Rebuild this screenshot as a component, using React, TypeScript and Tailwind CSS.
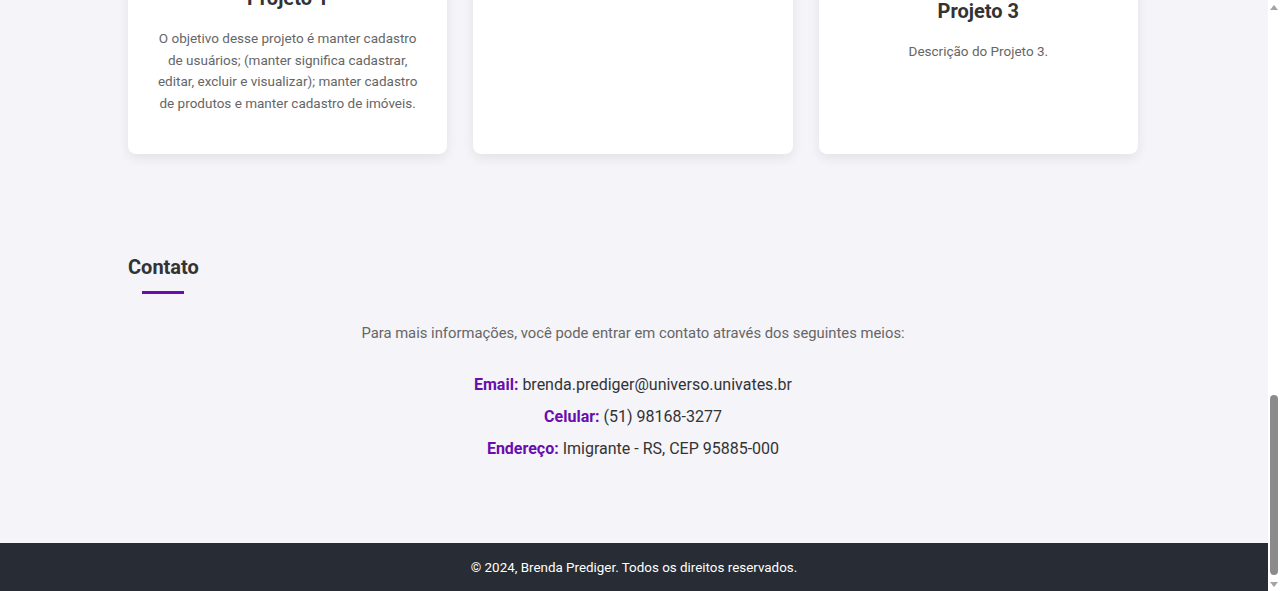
import { useLayoutEffect, useRef } from "react";

const projetos = [
  {
    titulo: "Projeto 1",
    imagem: "h-[200px] bg-gradient-to-br from-purple-200 to-indigo-200",
    descricao:
      "O objetivo desse projeto é manter cadastro de usuários; (manter significa cadastrar, editar, excluir e visualizar); manter cadastro de produtos e manter cadastro de imóveis.",
  },
  {
    titulo: "Projeto 2",
    imagem: "h-[60px] bg-gradient-to-br from-indigo-200 to-purple-200",
    descricao: "Descrição do Projeto 2.",
  },
  {
    titulo: "Projeto 3",
    imagem: "h-[213px] bg-gradient-to-br from-purple-100 to-purple-300",
    descricao: "Descrição do Projeto 3.",
  },
];

function SectionTitle({ children }: { children: string }) {
  return (
    <div className="inline-flex flex-col items-center">
      <h2 className="text-[20px] leading-7 font-bold text-[#333]">{children}</h2>
      <span className="mt-[10px] h-[3px] w-[42px] bg-[#6a0dad]" />
    </div>
  );
}

function Header() {
  return (
    <header className="h-16 bg-[#282c34] text-white">
      <div className="mx-auto flex h-full w-[1010px] items-center justify-between">
        <span className="text-lg font-bold">Brenda Prediger</span>
        <nav className="flex gap-6 text-sm">
          <a href="#sobre">Sobre</a>
          <a href="#projetos">Projetos</a>
          <a href="#contato">Contato</a>
        </nav>
      </div>
    </header>
  );
}

function Sobre() {
  return (
    <section id="sobre" className="mx-auto flex min-h-[810px] w-[1010px] flex-col items-center justify-center gap-6 text-center">
      <div className="h-40 w-40 rounded-full bg-purple-200" />
      <h1 className="text-3xl font-bold text-[#333]">Olá, eu sou a Brenda Prediger</h1>
      <p className="max-w-xl text-base text-[#666]">
        Estudante de Engenharia de Software na Univates. Aqui você encontra alguns dos projetos que desenvolvi.
      </p>
    </section>
  );
}

function Projetos() {
  return (
    <section id="projetos" className="mx-auto w-[1010px] pt-[60px] pb-[50px]">
      <SectionTitle>Projetos</SectionTitle>
      <div className="mt-10 grid grid-cols-3 gap-[26px]">
        {projetos.map((p) => (
          <div
            key={p.titulo}
            className="rounded-lg bg-white px-6 pt-5 pb-[40px] text-center shadow-[0_4px_12px_rgba(0,0,0,0.08)]"
          >
            <div className={`rounded-md ${p.imagem}`} />
            <h3 className="mb-[16px] text-[20px] leading-7 font-bold text-[#333]">{p.titulo}</h3>
            <p className="text-[13.5px] leading-[21.5px] text-[#666]">{p.descricao}</p>
          </div>
        ))}
      </div>
    </section>
  );
}

function Contato() {
  return (
    <section id="contato" className="mx-auto w-[1010px] pt-[49px] pb-[82px]">
      <SectionTitle>Contato</SectionTitle>
      <p className="mt-[27px] text-center text-[14.8px] leading-6 text-[#666]">
        Para mais informações, você pode entrar em contato através dos seguintes meios:
      </p>
      <ul className="mt-[28px] flex flex-col gap-2 text-center text-base leading-6 text-[#333]">
        <li>
          <strong className="text-[#6a0dad]">Email:</strong> brenda.prediger@universo.univates.br
        </li>
        <li>
          <strong className="text-[#6a0dad]">Celular:</strong> (51) 98168-3277
        </li>
        <li>
          <strong className="text-[#6a0dad]">Endereço:</strong> Imigrante - RS, CEP 95885-000
        </li>
      </ul>
    </section>
  );
}

// barra de rolagem da janela, como aparece no navegador
function BarraRolagem() {
  return (
    <div className="flex w-3 shrink-0 flex-col items-center bg-white">
      <div className="flex h-[14px] items-center justify-center">
        <span className="h-0 w-0 border-x-[4px] border-b-[5px] border-x-transparent border-b-[#a3a3a3]" />
      </div>
      <div className="flex flex-1 flex-col justify-end pb-[2px]">
        <div className="h-[180px] w-[8px] rounded-full bg-[#8b8b8b]" />
      </div>
      <div className="flex h-[14px] items-center justify-center">
        <span className="h-0 w-0 border-x-[4px] border-t-[5px] border-x-transparent border-t-[#a3a3a3]" />
      </div>
    </div>
  );
}

export default function App() {
  const pagina = useRef<HTMLDivElement>(null);

  useLayoutEffect(() => {
    if (pagina.current) pagina.current.scrollTop = pagina.current.scrollHeight;
  }, []);

  return (
    <div className="flex h-screen font-['Roboto',sans-serif]">
      <div
        ref={pagina}
        className="flex-1 overflow-y-auto bg-[#f4f4f9] [scrollbar-width:none]"
      >
        <Header />
        <main className="pr-[2px]">
          <Sobre />
          <Projetos />
          <Contato />
        </main>
        <footer className="bg-[#282c34] pt-[15px] pb-[13px] text-center text-[13.4px] leading-5 text-white">
          © 2024, Brenda Prediger. Todos os direitos reservados.
        </footer>
      </div>
      <BarraRolagem />
    </div>
  );
}
